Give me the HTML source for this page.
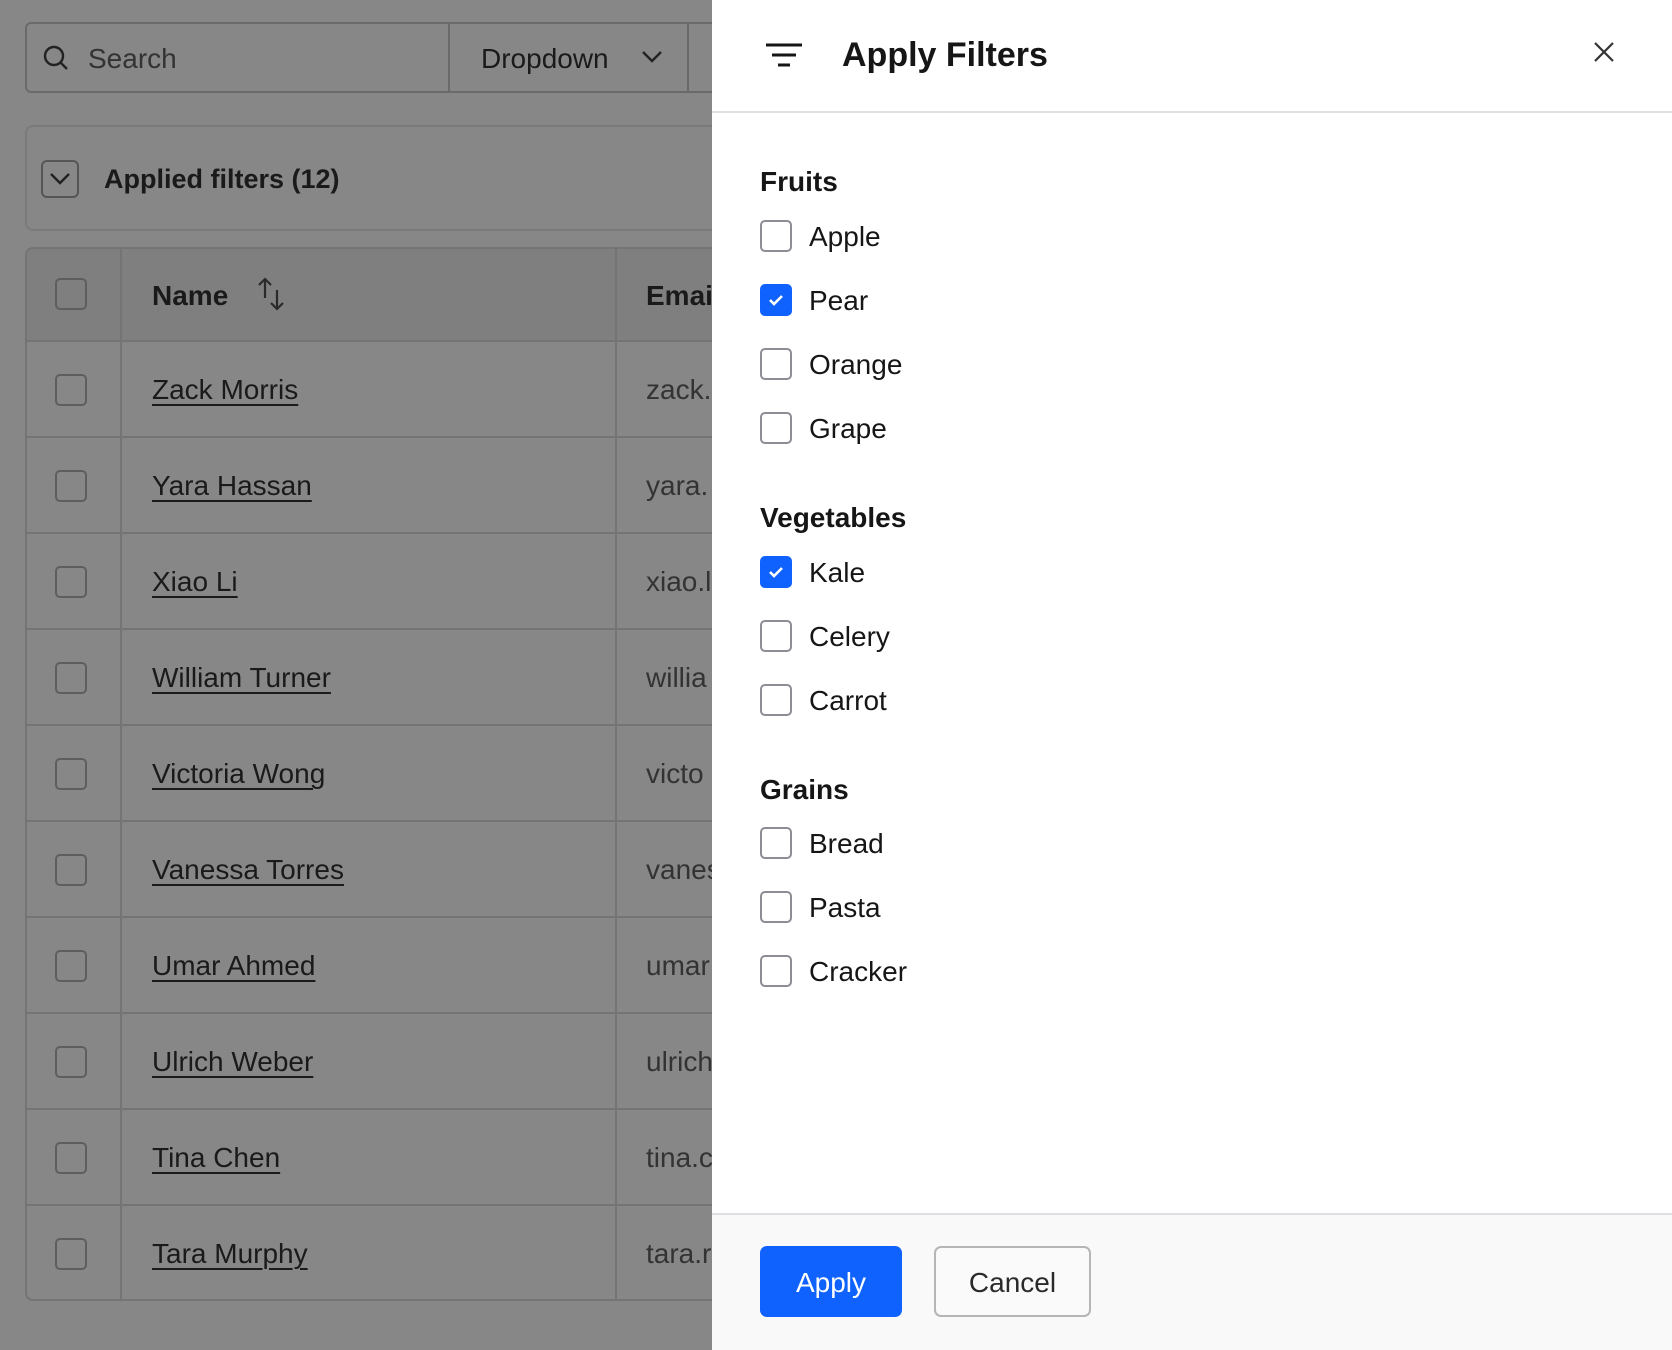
<!DOCTYPE html>
<html><head><meta charset="utf-8"><style>
*{box-sizing:border-box;margin:0;padding:0}
body{width:1672px;height:1350px;overflow:hidden;background:#878787;font-family:"Liberation Sans",sans-serif;position:relative;color:#161616}
.abs{position:absolute}
.cb{position:absolute;width:32px;height:32px;border:2px solid #5e5e5e;border-radius:5px}
.row{position:absolute;left:25px;width:700px;height:96px;border-top:2px solid #747474}
.name{position:absolute;left:152px;top:32px;font-size:28px;color:#1a1a1a;text-decoration:underline;text-underline-offset:5px;text-decoration-thickness:2px;white-space:nowrap}
.email{position:absolute;left:646px;top:32px;font-size:28px;color:#333;white-space:nowrap}
.panel{position:absolute;left:712px;top:0;width:960px;height:1350px;background:#fff}
.h{position:absolute;left:48px;font-size:28px;font-weight:bold;color:#161616}
.it{position:absolute;left:48px;height:32px;font-size:28px;color:#161616}
.it .b{position:absolute;left:0;top:0;width:32px;height:32px;border:2px solid #8d8d95;border-radius:5px;background:#fff}
.it .b.on{background:#0f62fe;border-color:#0f62fe}
.it span{position:absolute;left:49px;top:1px;white-space:nowrap}
</style></head><body>
<div class="abs" style="left:25px;top:22px;width:700px;height:71px;border:2px solid #6a6a6a;border-radius:6px"></div>
<svg class="abs" style="left:42px;top:44px" width="28" height="28" viewBox="0 0 28 28"><circle cx="12" cy="12" r="9" fill="none" stroke="#222" stroke-width="2.4"/><path d="M19 19l6 6" stroke="#222" stroke-width="2.4"/></svg>
<div class="abs" style="left:88px;top:43px;font-size:28px;color:#333">Search</div>
<div class="abs" style="left:448px;top:23px;width:2px;height:69px;background:#6a6a6a"></div>
<div class="abs" style="left:481px;top:43px;font-size:28px;color:#1a1a1a">Dropdown</div>
<svg class="abs" style="left:641px;top:49px" width="22" height="16" viewBox="0 0 22 16"><path d="M2 3l9 9 9-9" fill="none" stroke="#222" stroke-width="2.4"/></svg>
<div class="abs" style="left:687px;top:23px;width:2px;height:69px;background:#6a6a6a"></div>
<div class="abs" style="left:25px;top:125px;width:720px;height:106px;border:2px solid #7a7a7a;border-radius:8px"></div>
<div class="abs" style="left:41px;top:160px;width:38px;height:38px;border:2px solid #555;border-radius:6px"></div>
<svg class="abs" style="left:49px;top:171px" width="22" height="16" viewBox="0 0 22 16"><path d="M2 3l9 9 9-9" fill="none" stroke="#222" stroke-width="2.4"/></svg>
<div class="abs" style="left:104px;top:164px;font-size:27px;font-weight:bold;color:#1a1a1a">Applied filters (12)</div>
<div class="abs" style="left:25px;top:247px;width:700px;height:1054px;border:2px solid #747474;border-radius:8px"></div>
<div class="abs" style="left:27px;top:249px;width:700px;height:92px;background:#7f7f7f;border-radius:6px 0 0 0"></div>
<div class="abs" style="left:120px;top:249px;width:2px;height:1050px;background:#747474"></div>
<div class="abs" style="left:615px;top:249px;width:2px;height:1050px;background:#747474"></div>
<div class="cb" style="left:55px;top:278px"></div>
<div class="abs" style="left:152px;top:280px;font-size:28px;font-weight:bold;color:#1a1a1a">Name</div>
<svg class="abs" style="left:256px;top:276px" width="32" height="36" viewBox="0 0 32 36"><path d="M9 22V3M3 9l6-6 6 6M21 14v19M15 27l6 6 6-6" fill="none" stroke="#2a2a2a" stroke-width="2.2"/></svg>
<div class="abs" style="left:646px;top:280px;font-size:28px;font-weight:bold;color:#1a1a1a">Email</div>
<div class="row" style="top:340px"><div class="cb" style="left:30px;top:32px"></div><div class="name" style="left:127px">Zack Morris</div><div class="email" style="left:621px">zack.</div></div>
<div class="row" style="top:436px"><div class="cb" style="left:30px;top:32px"></div><div class="name" style="left:127px">Yara Hassan</div><div class="email" style="left:621px">yara.</div></div>
<div class="row" style="top:532px"><div class="cb" style="left:30px;top:32px"></div><div class="name" style="left:127px">Xiao Li</div><div class="email" style="left:621px">xiao.l</div></div>
<div class="row" style="top:628px"><div class="cb" style="left:30px;top:32px"></div><div class="name" style="left:127px">William Turner</div><div class="email" style="left:621px">willia</div></div>
<div class="row" style="top:724px"><div class="cb" style="left:30px;top:32px"></div><div class="name" style="left:127px">Victoria Wong</div><div class="email" style="left:621px">victo</div></div>
<div class="row" style="top:820px"><div class="cb" style="left:30px;top:32px"></div><div class="name" style="left:127px">Vanessa Torres</div><div class="email" style="left:621px">vanes</div></div>
<div class="row" style="top:916px"><div class="cb" style="left:30px;top:32px"></div><div class="name" style="left:127px">Umar Ahmed</div><div class="email" style="left:621px">umar</div></div>
<div class="row" style="top:1012px"><div class="cb" style="left:30px;top:32px"></div><div class="name" style="left:127px">Ulrich Weber</div><div class="email" style="left:621px">ulrich</div></div>
<div class="row" style="top:1108px"><div class="cb" style="left:30px;top:32px"></div><div class="name" style="left:127px">Tina Chen</div><div class="email" style="left:621px">tina.c</div></div>
<div class="row" style="top:1204px"><div class="cb" style="left:30px;top:32px"></div><div class="name" style="left:127px">Tara Murphy</div><div class="email" style="left:621px">tara.r</div></div>
<div class="panel">
 <svg class="abs" style="left:54px;top:43px" width="36" height="24" viewBox="0 0 36 24"><path d="M0 2h36M6 12h24M12 22h12" stroke="#161616" stroke-width="3"/></svg>
 <div class="abs" style="left:130px;top:36px;font-size:34px;font-weight:bold;color:#161616">Apply Filters</div>
 <svg class="abs" style="left:881px;top:41px" width="22" height="22" viewBox="0 0 22 22"><path d="M2 2l18 18M20 2L2 20" stroke="#333" stroke-width="2.2"/></svg>
 <div class="abs" style="left:0;top:111px;width:960px;height:2px;background:#e0e0e4"></div>
 <div class="h" style="top:166px">Fruits</div>
 <div class="it" style="top:220px"><div class="b"></div><span>Apple</span></div>
 <div class="it" style="top:284px"><div class="b on"><svg width="28" height="28" viewBox="0 0 28 28" style="position:absolute;left:0;top:0"><path d="M8 14l4 4 8-8" fill="none" stroke="#fff" stroke-width="2.6"/></svg></div><span>Pear</span></div>
 <div class="it" style="top:348px"><div class="b"></div><span>Orange</span></div>
 <div class="it" style="top:412px"><div class="b"></div><span>Grape</span></div>
 <div class="h" style="top:502px">Vegetables</div>
 <div class="it" style="top:556px"><div class="b on"><svg width="28" height="28" viewBox="0 0 28 28" style="position:absolute;left:0;top:0"><path d="M8 14l4 4 8-8" fill="none" stroke="#fff" stroke-width="2.6"/></svg></div><span>Kale</span></div>
 <div class="it" style="top:620px"><div class="b"></div><span>Celery</span></div>
 <div class="it" style="top:684px"><div class="b"></div><span>Carrot</span></div>
 <div class="h" style="top:774px">Grains</div>
 <div class="it" style="top:827px"><div class="b"></div><span>Bread</span></div>
 <div class="it" style="top:891px"><div class="b"></div><span>Pasta</span></div>
 <div class="it" style="top:955px"><div class="b"></div><span>Cracker</span></div>
 <div class="abs" style="left:0;top:1213px;width:960px;height:137px;background:#f9f9f9;border-top:2px solid #e0e0e4"></div>
 <div class="abs" style="left:48px;top:1246px;width:142px;height:71px;background:#0f62fe;border-radius:7px;color:#fff;font-size:28px;text-align:center;line-height:73px">Apply</div>
 <div class="abs" style="left:222px;top:1246px;width:157px;height:71px;background:#fafafa;border:2px solid #b5b5b5;border-radius:7px;color:#2a2a2a;font-size:28px;text-align:center;line-height:69px">Cancel</div>
</div>
</body></html>
